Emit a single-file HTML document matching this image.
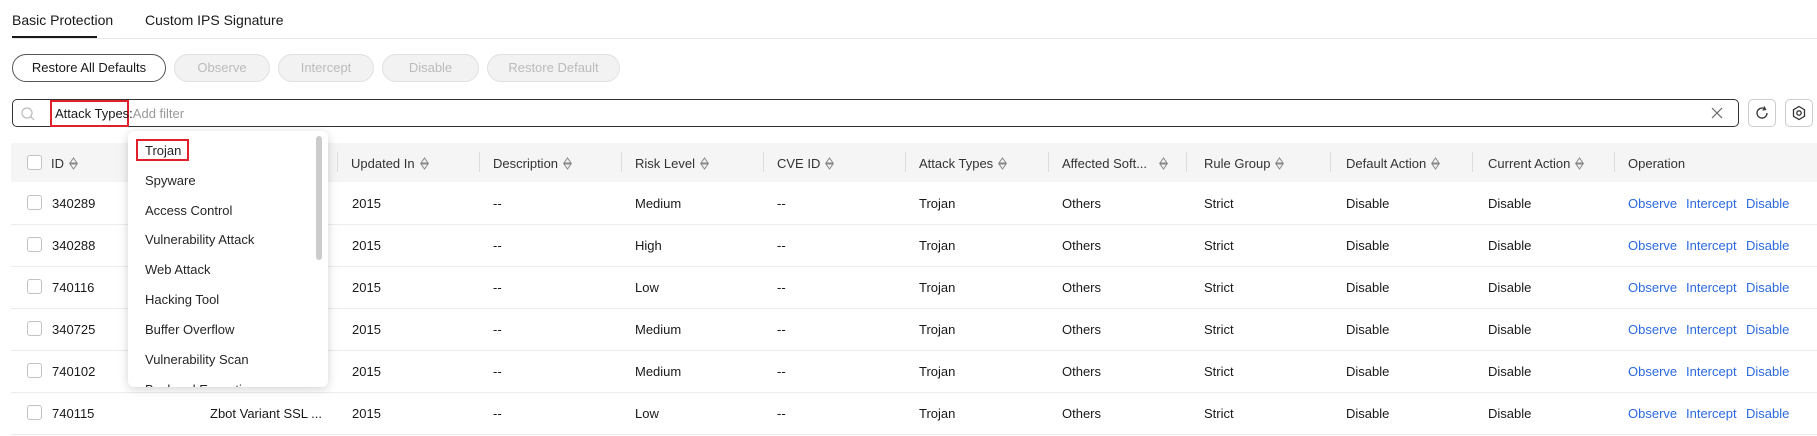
<!DOCTYPE html><html><head><style>
*{margin:0;padding:0;box-sizing:border-box}
body{width:1817px;height:436px;background:#fff;font-family:"Liberation Sans",sans-serif;color:#191919;position:relative;overflow:hidden;font-size:13px}
.a{position:absolute;white-space:nowrap}
.btn{position:absolute;top:54px;height:28px;border-radius:14px;border:1px solid #e0e0e0;background:#f2f2f2;color:#bbb;font-size:13px;text-align:center;line-height:26px}
.hd{position:absolute;top:143px;height:39px;left:11px;right:0;background:#f5f5f5}
.th{position:absolute;top:156px;font-size:13px;color:#333}
.sep{position:absolute;top:152px;width:1px;height:20px;background:#ddd}
.line{position:absolute;left:11px;right:0;height:1px;background:#ececec}
.cb{position:absolute;left:27px;width:15px;height:15px;border:1px solid #c2c2c2;border-radius:3px;background:#fff}
.sort{display:inline-block;vertical-align:-2px;margin-left:5px}
.lk{color:#2c6ae0}
.dd{position:absolute;left:128px;top:131px;width:200px;height:256px;background:#fff;border-radius:6px;box-shadow:0 2px 10px rgba(0,0,0,.18);overflow:hidden}
.dd div{position:absolute;left:17px;font-size:13px;color:#252525}
</style></head><body>
<div class="a" style="left:12px;top:12px;font-size:14px;color:#191919">Basic Protection</div>
<div class="a" style="left:145px;top:12px;font-size:14px;color:#191919">Custom IPS Signature</div>
<div class="a" style="left:12px;top:38px;width:1805px;height:1px;background:#e8e8e8"></div>
<div class="a" style="left:12px;top:36px;width:85px;height:2px;background:#191919"></div>

<div class="btn" style="left:12px;width:154px;background:#fff;border-color:#555;color:#191919">Restore All Defaults</div>
<div class="btn" style="left:174px;width:96px">Observe</div>
<div class="btn" style="left:278px;width:96px">Intercept</div>
<div class="btn" style="left:382px;width:97px">Disable</div>
<div class="btn" style="left:487px;width:133px">Restore Default</div>

<div class="a" style="left:12px;top:99px;width:1727px;height:28px;border:1px solid #333;border-radius:5px"></div>
<svg class="a" style="left:20px;top:106px" width="16" height="16" viewBox="0 0 16 16"><circle cx="7" cy="7" r="5" fill="none" stroke="#bbb" stroke-width="1.2"/><line x1="10.6" y1="10.6" x2="14" y2="14" stroke="#bbb" stroke-width="1.2"/></svg>
<div class="a" style="left:50px;top:100px;width:79px;height:27px;border:2px solid #e0202a"></div>
<div class="a" style="left:55px;top:106px;font-size:13px;color:#191919">Attack Types:<span style="color:#999">Add filter</span></div>
<svg class="a" style="left:1711px;top:107px" width="12" height="12"><path d="M1 1L11 11M11 1L1 11" stroke="#666" stroke-width="1.2"/></svg>
<div class="a" style="left:1748px;top:99px;width:28px;height:28px;border:1px solid #ccc;border-radius:5px"></div>
<svg class="a" style="left:1754px;top:105px" width="16" height="16" viewBox="0 0 16 16"><path d="M13 8A5 5 0 1 1 10.5 3.7" fill="none" stroke="#333" stroke-width="1.3"/><path d="M10 1.5L11.5 4.5L8.5 5" fill="none" stroke="#333" stroke-width="1.3"/></svg>
<div class="a" style="left:1785px;top:99px;width:28px;height:28px;border:1px solid #ccc;border-radius:5px"></div>
<svg class="a" style="left:1791px;top:105px" width="16" height="16" viewBox="0 0 16 16"><path d="M8 1.5L13.5 4.7V11.3L8 14.5L2.5 11.3V4.7Z" fill="none" stroke="#333" stroke-width="1.3"/><circle cx="8" cy="8" r="2.2" fill="none" stroke="#333" stroke-width="1.3"/></svg>

<div class="hd"></div>
<div class="cb" style="top:155px"></div>
<div class="th" style="left:51px">ID<svg class="sort" width="9" height="13" viewBox="0 0 9 13"><path d="M4.5 1L8 6H1Z M1 7H8L4.5 12Z" fill="none" stroke="#888"/></svg></div>
<div class="th" style="left:351px">Updated In<svg class="sort" width="9" height="13" viewBox="0 0 9 13"><path d="M4.5 1L8 6H1Z M1 7H8L4.5 12Z" fill="none" stroke="#888"/></svg></div>
<div class="th" style="left:493px">Description<svg class="sort" width="9" height="13" viewBox="0 0 9 13"><path d="M4.5 1L8 6H1Z M1 7H8L4.5 12Z" fill="none" stroke="#888"/></svg></div>
<div class="th" style="left:635px">Risk Level<svg class="sort" width="9" height="13" viewBox="0 0 9 13"><path d="M4.5 1L8 6H1Z M1 7H8L4.5 12Z" fill="none" stroke="#888"/></svg></div>
<div class="th" style="left:777px">CVE ID<svg class="sort" width="9" height="13" viewBox="0 0 9 13"><path d="M4.5 1L8 6H1Z M1 7H8L4.5 12Z" fill="none" stroke="#888"/></svg></div>
<div class="th" style="left:919px">Attack Types<svg class="sort" width="9" height="13" viewBox="0 0 9 13"><path d="M4.5 1L8 6H1Z M1 7H8L4.5 12Z" fill="none" stroke="#888"/></svg></div>
<div class="th" style="left:1062px">Affected Soft...<svg class="sort" style="margin-left:12px" width="9" height="13" viewBox="0 0 9 13"><path d="M4.5 1L8 6H1Z M1 7H8L4.5 12Z" fill="none" stroke="#888"/></svg></div>
<div class="th" style="left:1204px">Rule Group<svg class="sort" width="9" height="13" viewBox="0 0 9 13"><path d="M4.5 1L8 6H1Z M1 7H8L4.5 12Z" fill="none" stroke="#888"/></svg></div>
<div class="th" style="left:1346px">Default Action<svg class="sort" width="9" height="13" viewBox="0 0 9 13"><path d="M4.5 1L8 6H1Z M1 7H8L4.5 12Z" fill="none" stroke="#888"/></svg></div>
<div class="th" style="left:1488px">Current Action<svg class="sort" width="9" height="13" viewBox="0 0 9 13"><path d="M4.5 1L8 6H1Z M1 7H8L4.5 12Z" fill="none" stroke="#888"/></svg></div>
<div class="th" style="left:1628px">Operation</div>
<div class="sep" style="left:337px"></div><div class="sep" style="left:479px"></div><div class="sep" style="left:621px"></div><div class="sep" style="left:763px"></div><div class="sep" style="left:905px"></div><div class="sep" style="left:1048px"></div><div class="sep" style="left:1186px"></div><div class="sep" style="left:1330px"></div><div class="sep" style="left:1472px"></div><div class="sep" style="left:1614px"></div>

<div id="rows"></div>
<script>
var d=[["340289","","Medium"],["340288","","High"],["740116","","Low"],["340725","","Medium"],["740102","","Medium"],["740115","Zbot Variant SSL ...","Low"]];
var h="";
d.forEach(function(r,i){var t=182+i*42,y=t+14;
h+='<div class="line" style="top:'+(t+42)+'px"></div><div class="cb" style="top:'+(t+13)+'px"></div>';
var c=[[52,r[0]],[210,r[1]],[352,"2015"],[493,"--"],[635,r[2]],[777,"--"],[919,"Trojan"],[1062,"Others"],[1204,"Strict"],[1346,"Disable"],[1488,"Disable"]];
c.forEach(function(x){h+='<div class="a" style="left:'+x[0]+'px;top:'+y+'px">'+x[1]+'</div>'});
h+='<div class="a lk" style="left:1628px;top:'+y+'px">Observe</div><div class="a lk" style="left:1686px;top:'+y+'px">Intercept</div><div class="a lk" style="left:1746px;top:'+y+'px">Disable</div>';});
document.getElementById("rows").innerHTML=h;
</script>

<div class="dd">
<div style="top:12px">Trojan</div>
<div style="top:42px">Spyware</div>
<div style="top:72px">Access Control</div>
<div style="top:101px">Vulnerability Attack</div>
<div style="top:131px">Web Attack</div>
<div style="top:161px">Hacking Tool</div>
<div style="top:191px">Buffer Overflow</div>
<div style="top:221px">Vulnerability Scan</div>
<div style="top:251px">Backend Execution</div>
<span style="position:absolute;left:8px;top:8px;width:53px;height:22px;border:2px solid #e0202a"></span>
<span style="position:absolute;left:188px;top:5px;width:6px;height:124px;border-radius:3px;background:#ccc"></span>
</div>
</body></html>
